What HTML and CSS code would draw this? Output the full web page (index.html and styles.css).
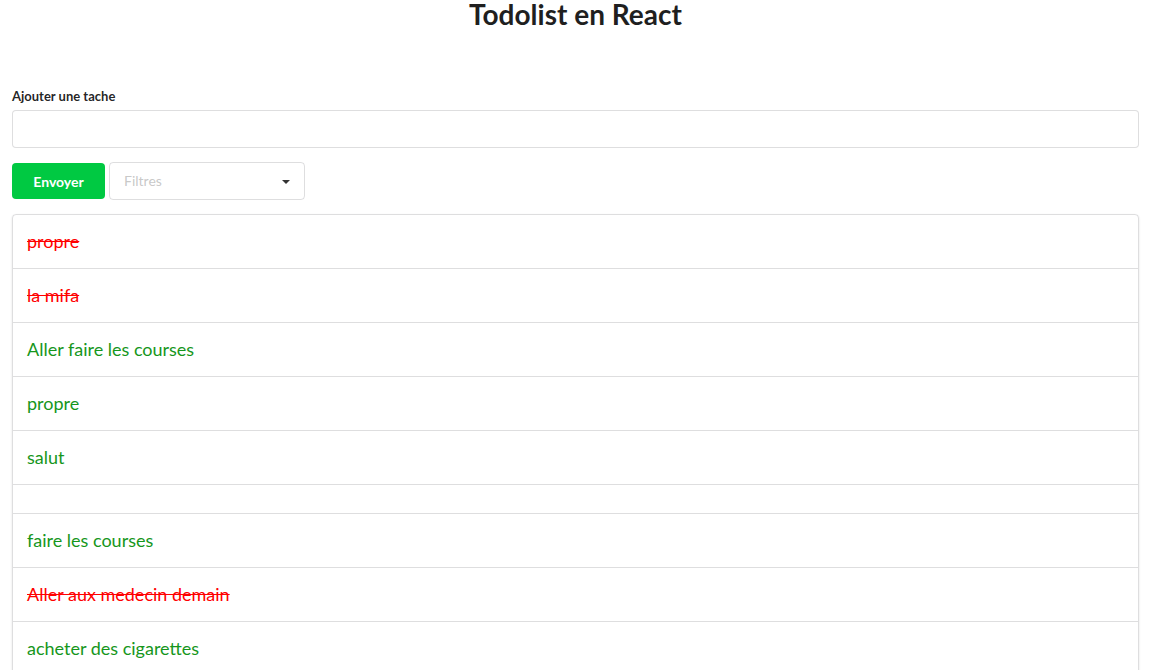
FILE: index.html
```html
<!DOCTYPE html>
<html lang="fr">
<head>
<meta charset="utf-8">
<title>Todolist en React</title>
<link rel="stylesheet" href="styles.css">
</head>
<body>
<div class="app">
  <h1 class="title">Todolist en React</h1>
  <form class="form">
    <div class="field">
      <label class="label">Ajouter une tache</label>
      <input class="input" type="text">
    </div>
    <div class="actions">
      <button class="btn" type="button">Envoyer</button>
      <div class="dropdown">
        <span class="placeholder">Filtres</span>
        <span class="caret"></span>
      </div>
    </div>
  </form>
  <div class="list">
    <div class="item done">propre</div>
    <div class="item done">la mifa</div>
    <div class="item todo">Aller faire les courses</div>
    <div class="item todo">propre</div>
    <div class="item todo">salut</div>
    <div class="item empty"></div>
    <div class="item todo">faire les courses</div>
    <div class="item done">Aller aux medecin demain</div>
    <div class="item todo">acheter des cigarettes</div>
  </div>
</div>
</body>
</html>
```
FILE: styles.css
```css
* { box-sizing: border-box; }
html, body { margin: 0; padding: 0; background: #fff; }
body {
  font-family: Lato, "Helvetica Neue", Arial, sans-serif;
  font-size: 14px;
  line-height: 1.4285em;
  color: rgba(0,0,0,.87);
}
.app { padding: 0 12px; }
.title {
  margin: 0;
  text-align: center;
  font-size: 28px;
  font-weight: 700;
  line-height: 28px;
  color: #1f1f1f;
  padding-bottom: 60px;
}
.field { margin-bottom: 14px; }
.label {
  display: block;
  font-size: 13px;
  font-weight: 700;
  line-height: 16px;
  color: rgba(0,0,0,.87);
  margin-bottom: 6px;
}
.input {
  display: block;
  width: 100%;
  height: 38px;
  border: 1px solid rgba(34,36,38,.15);
  border-radius: 4px;
  padding: 9px 14px;
  font-family: inherit;
  font-size: 14px;
  outline: none;
}
.actions {
  display: flex;
  align-items: center;
  gap: 4px;
  margin-bottom: 14px;
}
.btn {
  width: 93px;
  height: 36px;
  border: 0;
  border-radius: 4px;
  background: #00c942;
  color: #fff;
  font-family: inherit;
  font-size: 14px;
  font-weight: 700;
  padding: 0;
}
.dropdown {
  position: relative;
  width: 196px;
  height: 38px;
  border: 1px solid rgba(34,36,38,.15);
  border-radius: 4px;
  display: flex;
  align-items: center;
  padding: 0 14px;
}
.placeholder { color: rgba(191,191,191,.87); font-size: 14px; }
.caret {
  position: absolute;
  right: 14px;
  top: 17px;
  width: 0;
  height: 0;
  border-left: 4px solid transparent;
  border-right: 4px solid transparent;
  border-top: 4px solid rgba(0,0,0,.8);
}
.list {
  border: 1px solid rgba(34,36,38,.15);
  border-radius: 4px;
  box-shadow: 0 1px 2px 0 rgba(34,36,38,.15);
}
.item {
  padding: 14px 14px;
  font-size: 18px;
  line-height: 25px;
  border-top: 1px solid rgba(34,36,38,.15);
  min-height: 29px;
}
.item:first-child { border-top: 0; min-height: 53px; }
.item.empty { height: 29px; padding: 0; }
.done { color: #ff0000; text-decoration: line-through; }
.todo { color: #16961c; }
```
